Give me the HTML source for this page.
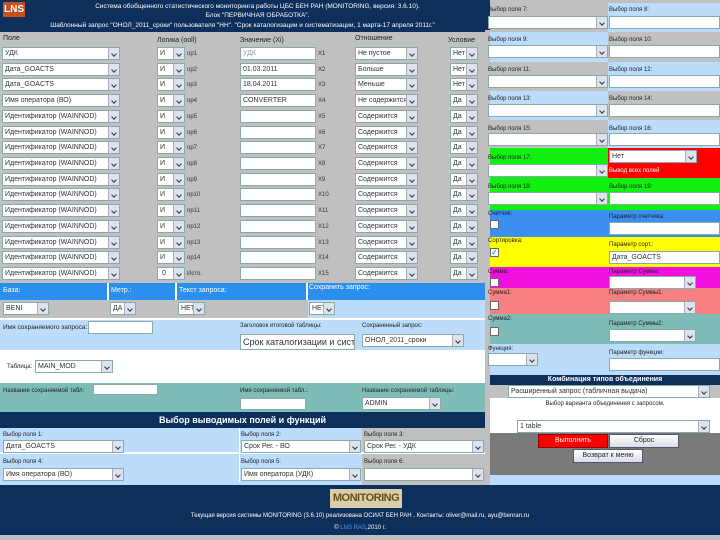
<!DOCTYPE html><html><head><meta charset="utf-8"><style>
*{margin:0;padding:0;box-sizing:border-box}
body{width:720px;height:540px;overflow:hidden;background:#c0c0c0;font-family:"Liberation Sans","DejaVu Sans",sans-serif;font-size:7px;color:#222;position:relative}
div,i,b,u,em{position:absolute;font-style:normal;font-weight:normal;text-decoration:none}
.r{left:0;width:485px;height:13px}
.s,.n{top:0;height:13px;background:#fff;border:1px solid #8aa;font-size:7px;line-height:11px;padding-left:2px;white-space:nowrap;overflow:hidden;color:#333}
.s::after{content:"";position:absolute;right:0;top:0;width:10px;height:11px;background:#dde3ee;border-left:1px solid #aab}
.s::before{content:"";position:absolute;right:3px;top:4px;width:3px;height:3px;border-right:1px solid #334;border-bottom:1px solid #334;transform:rotate(45deg);z-index:2}
b{font-size:6px;top:4px;color:#333}
.l{font-size:7px;white-space:nowrap;color:#222}
.lb{background:#bbdcfb}.gr{background:#c0c0c0}.nv{background:#0d2f5c}
.cb{width:9px;height:9px;background:#fff;border:1px solid #667}
</style></head><body>
<div class="nv" style="left:0;top:0;width:485px;height:32px"></div>
<div style="left:3px;top:2px;width:22px;height:15px;background:#c8501e;color:#fff;font-weight:bold;font-size:10px;line-height:15px;text-align:center">LNS</div>
<div class="l" style="left:30px;top:3px;width:455px;text-align:center;color:#fff;font-size:6.5px">Система обобщенного статистического мониторинга работы ЦБС БЕН РАН (MONITORING, версия: 3.6.10).</div>
<div class="l" style="left:30px;top:12px;width:455px;text-align:center;color:#fff;font-size:6.5px">Блок "ПЕРВИЧНАЯ ОБРАБОТКА".</div>
<div class="l" style="left:0;top:22px;width:485px;text-align:center;color:#fff;font-size:6.5px">Шаблонный запрос "ОНОЛ_2011_сроки" пользователя "НН". "Срок каталогизации и систематизации, 1 марта-17 апреля 2011г."</div>
<div class="l" style="left:3px;top:35px">Поле</div><div class="l" style="left:157px;top:37px">Логика (ooll)</div><div class="l" style="left:240px;top:37px">Значение (Xi)</div><div class="l" style="left:355px;top:35px">Отношение</div><div class="l" style="left:448px;top:37px">Условие</div>
<div class="r" style="top:47px"><i class="s" style="left:2px;width:118px">УДК</i><i class="s" style="left:157px;width:28px">И</i><b style="left:187px">op1</b><i class="n" style="left:240px;width:76px;color:#999">УДК</i><b style="left:318px">X1</b><i class="s" style="left:355px;width:63px">Не пустое</i><i class="s" style="left:450px;width:28px">Нет</i></div>
<div class="r" style="top:63px"><i class="s" style="left:2px;width:118px">Дата_GOACTS</i><i class="s" style="left:157px;width:28px">И</i><b style="left:187px">op2</b><i class="n" style="left:240px;width:76px">01.03.2011</i><b style="left:318px">X2</b><i class="s" style="left:355px;width:63px">Больше</i><i class="s" style="left:450px;width:28px">Нет</i></div>
<div class="r" style="top:78px"><i class="s" style="left:2px;width:118px">Дата_GOACTS</i><i class="s" style="left:157px;width:28px">И</i><b style="left:187px">op3</b><i class="n" style="left:240px;width:76px">18.04.2011</i><b style="left:318px">X3</b><i class="s" style="left:355px;width:63px">Меньше</i><i class="s" style="left:450px;width:28px">Нет</i></div>
<div class="r" style="top:94px"><i class="s" style="left:2px;width:118px">Имя оператора (ВО)</i><i class="s" style="left:157px;width:28px">И</i><b style="left:187px">op4</b><i class="n" style="left:240px;width:76px">CONVERTER</i><b style="left:318px">X4</b><i class="s" style="left:355px;width:63px">Не содержится</i><i class="s" style="left:450px;width:28px">Да</i></div>
<div class="r" style="top:110px"><i class="s" style="left:2px;width:118px">Идентификатор (WAINNOD)</i><i class="s" style="left:157px;width:28px">И</i><b style="left:187px">op5</b><i class="n" style="left:240px;width:76px"></i><b style="left:318px">X5</b><i class="s" style="left:355px;width:63px">Содержится</i><i class="s" style="left:450px;width:28px">Да</i></div>
<div class="r" style="top:126px"><i class="s" style="left:2px;width:118px">Идентификатор (WAINNOD)</i><i class="s" style="left:157px;width:28px">И</i><b style="left:187px">op6</b><i class="n" style="left:240px;width:76px"></i><b style="left:318px">X6</b><i class="s" style="left:355px;width:63px">Содержится</i><i class="s" style="left:450px;width:28px">Да</i></div>
<div class="r" style="top:141px"><i class="s" style="left:2px;width:118px">Идентификатор (WAINNOD)</i><i class="s" style="left:157px;width:28px">И</i><b style="left:187px">op7</b><i class="n" style="left:240px;width:76px"></i><b style="left:318px">X7</b><i class="s" style="left:355px;width:63px">Содержится</i><i class="s" style="left:450px;width:28px">Да</i></div>
<div class="r" style="top:157px"><i class="s" style="left:2px;width:118px">Идентификатор (WAINNOD)</i><i class="s" style="left:157px;width:28px">И</i><b style="left:187px">op8</b><i class="n" style="left:240px;width:76px"></i><b style="left:318px">X8</b><i class="s" style="left:355px;width:63px">Содержится</i><i class="s" style="left:450px;width:28px">Да</i></div>
<div class="r" style="top:173px"><i class="s" style="left:2px;width:118px">Идентификатор (WAINNOD)</i><i class="s" style="left:157px;width:28px">И</i><b style="left:187px">op9</b><i class="n" style="left:240px;width:76px"></i><b style="left:318px">X9</b><i class="s" style="left:355px;width:63px">Содержится</i><i class="s" style="left:450px;width:28px">Да</i></div>
<div class="r" style="top:188px"><i class="s" style="left:2px;width:118px">Идентификатор (WAINNOD)</i><i class="s" style="left:157px;width:28px">И</i><b style="left:187px">op10</b><i class="n" style="left:240px;width:76px"></i><b style="left:318px">X10</b><i class="s" style="left:355px;width:63px">Содержится</i><i class="s" style="left:450px;width:28px">Да</i></div>
<div class="r" style="top:204px"><i class="s" style="left:2px;width:118px">Идентификатор (WAINNOD)</i><i class="s" style="left:157px;width:28px">И</i><b style="left:187px">op11</b><i class="n" style="left:240px;width:76px"></i><b style="left:318px">X11</b><i class="s" style="left:355px;width:63px">Содержится</i><i class="s" style="left:450px;width:28px">Да</i></div>
<div class="r" style="top:220px"><i class="s" style="left:2px;width:118px">Идентификатор (WAINNOD)</i><i class="s" style="left:157px;width:28px">И</i><b style="left:187px">op12</b><i class="n" style="left:240px;width:76px"></i><b style="left:318px">X12</b><i class="s" style="left:355px;width:63px">Содержится</i><i class="s" style="left:450px;width:28px">Да</i></div>
<div class="r" style="top:236px"><i class="s" style="left:2px;width:118px">Идентификатор (WAINNOD)</i><i class="s" style="left:157px;width:28px">И</i><b style="left:187px">op13</b><i class="n" style="left:240px;width:76px"></i><b style="left:318px">X13</b><i class="s" style="left:355px;width:63px">Содержится</i><i class="s" style="left:450px;width:28px">Да</i></div>
<div class="r" style="top:251px"><i class="s" style="left:2px;width:118px">Идентификатор (WAINNOD)</i><i class="s" style="left:157px;width:28px">И</i><b style="left:187px">op14</b><i class="n" style="left:240px;width:76px"></i><b style="left:318px">X14</b><i class="s" style="left:355px;width:63px">Содержится</i><i class="s" style="left:450px;width:28px">Да</i></div>
<div class="r" style="top:267px"><i class="s" style="left:2px;width:118px">Идентификатор (WAINNOD)</i><i class="s" style="left:157px;width:28px">&nbsp;0</i><b style="left:187px">Исто.</b><i class="n" style="left:240px;width:76px"></i><b style="left:318px">X15</b><i class="s" style="left:355px;width:63px">Содержится</i><i class="s" style="left:450px;width:28px">Да</i></div>
<div style="left:0;top:283px;width:485px;height:17px;background:#2b8ff0"></div>
<div style="left:107px;top:283px;width:2px;height:17px;background:#fff"></div><div style="left:175px;top:283px;width:2px;height:17px;background:#fff"></div><div style="left:306px;top:283px;width:2px;height:17px;background:#fff"></div>
<div class="l" style="left:3px;top:287px;color:#fff">База:</div><div class="l" style="left:111px;top:287px;color:#fff">Метр.:</div><div class="l" style="left:179px;top:287px;color:#fff">Текст запроса:</div><div class="l" style="left:309px;top:284px;color:#fff">Сохранить запрос:</div>
<div style="left:308px;top:300px;width:177px;height:18px" class="lb"></div>
<div class="r" style="top:302px"><i class="s" style="left:3px;width:46px">BENI</i><i class="s" style="left:110px;width:26px">ДА</i><i class="s" style="left:178px;width:27px">НЕТ</i><i class="s" style="left:309px;width:26px">НЕТ</i></div>
<div class="lb" style="left:0;top:318px;width:485px;height:32px;border-top:2px solid #fff"></div>
<div class="l" style="left:3px;top:324px;font-size:6.5px">Имя сохраняемого запроса:</div><i class="n" style="left:88px;top:321px;width:65px"></i>
<div class="l" style="left:240px;top:323px;font-size:6px">Заголовок итоговой таблицы:</div>
<i class="n" style="left:240px;top:334px;width:115px;height:16px;font-size:9px;line-height:14px">Срок каталогизации и систем</i>
<div class="l" style="left:362px;top:323px;font-size:6px">Сохраненный запрос:</div>
<i class="s" style="left:362px;top:334px;width:102px">ОНОЛ_2011_сроки</i>
<div style="left:0;top:350px;width:485px;height:33px;background:#fff"></div>
<div class="l" style="left:7px;top:364px;font-size:6px">Таблица:</div><i class="s" style="left:35px;top:360px;width:78px">MAIN_MOD</i>
<div style="left:0;top:383px;width:485px;height:29px;background:#7ebcb8"></div>
<div class="l" style="left:3px;top:388px;font-size:6px">Название сохраняемой табл:</div><i class="n" style="left:93px;top:384px;width:65px;height:11px"></i>
<div class="l" style="left:240px;top:388px;font-size:6px">Имя сохраняемой табл.:</div><i class="n" style="left:240px;top:398px;width:66px;height:12px"></i>
<div class="l" style="left:362px;top:388px;font-size:6px">Название сохраняемой таблицы:</div><i class="s" style="left:362px;top:397px;width:79px">ADMIN</i>
<div class="nv" style="left:0;top:412px;width:485px;height:16px;color:#fff;font-size:9px;font-weight:bold;text-align:center;line-height:16px">Выбор выводимых полей и функций</div>
<div class="lb" style="left:0;top:428px;width:362px;height:57px"></div>
<div style="left:0;top:452px;width:485px;height:2px;background:#fff"></div>
<div style="left:239px;top:428px;width:1px;height:54px;background:#fff"></div>
<div class="l" style="left:3px;top:432px;font-size:6px">Выбор поля 1:</div><div class="l" style="left:241px;top:432px;font-size:6px">Выбор поля 2:</div><div class="l" style="left:364px;top:432px;font-size:6px">Выбор поля 3:</div>
<i class="s" style="left:3px;top:440px;width:121px">Дата_GOACTS</i><i class="s" style="left:241px;top:440px;width:120px">Срок Рег. - ВО</i><i class="s" style="left:364px;top:440px;width:120px">Срок Рег. - УДК</i>
<div class="l" style="left:3px;top:459px;font-size:6px">Выбор поля 4:</div><div class="l" style="left:241px;top:459px;font-size:6px">Выбор поля 5:</div><div class="l" style="left:364px;top:459px;font-size:6px">Выбор поля 6:</div>
<i class="s" style="left:3px;top:468px;width:121px">Имя оператора (ВО)</i><i class="s" style="left:241px;top:468px;width:120px">Имя оператора (УДК)</i><i class="s" style="left:364px;top:468px;width:120px"></i>
<div class="nv" style="left:485px;top:0;width:5px;height:30px"></div>
<div class="gr" style="left:490px;top:3px;width:118px;height:29px"></div><div class="lb" style="left:608px;top:3px;width:112px;height:29px"></div>
<div class="lb" style="left:490px;top:32px;width:118px;height:30px"></div><div class="gr" style="left:608px;top:32px;width:112px;height:30px"></div>
<div class="gr" style="left:490px;top:62px;width:118px;height:29px"></div><div class="lb" style="left:608px;top:62px;width:112px;height:29px"></div>
<div class="lb" style="left:490px;top:91px;width:118px;height:29px"></div><div class="gr" style="left:608px;top:91px;width:112px;height:29px"></div>
<div class="gr" style="left:490px;top:120px;width:118px;height:28px"></div><div class="lb" style="left:608px;top:120px;width:112px;height:28px"></div>
<div style="left:490px;top:148px;width:230px;height:62px;background:#11f011"></div>
<div style="left:608px;top:148px;width:112px;height:30px;background:#f00"></div>
<div style="left:490px;top:210px;width:230px;height:27px;background:#3a8ff0"></div>
<div style="left:490px;top:237px;width:230px;height:30px;background:#ffff00"></div>
<div style="left:490px;top:267px;width:230px;height:21px;background:#f010e0"></div>
<div style="left:490px;top:288px;width:230px;height:26px;background:#f88080"></div>
<div style="left:490px;top:314px;width:230px;height:30px;background:#7ebcb8"></div>
<div class="lb" style="left:490px;top:344px;width:230px;height:31px"></div>
<div class="l" style="left:488px;top:7px;font-size:6px">Выбор поля 7:</div><div class="l" style="left:609px;top:7px;font-size:6px">Выбор поля 8:</div>
<i class="s" style="left:488px;top:16px;width:120px"></i><i class="n" style="left:609px;top:16px;width:111px"></i>
<div class="l" style="left:488px;top:37px;font-size:6px">Выбор поля 9:</div><div class="l" style="left:609px;top:37px;font-size:6px">Выбор поля 10:</div>
<i class="s" style="left:488px;top:45px;width:120px"></i><i class="n" style="left:609px;top:45px;width:111px"></i>
<div class="l" style="left:488px;top:67px;font-size:6px">Выбор поля 11:</div><div class="l" style="left:609px;top:67px;font-size:6px">Выбор поля 12:</div>
<i class="s" style="left:488px;top:75px;width:120px"></i><i class="n" style="left:609px;top:75px;width:111px"></i>
<div class="l" style="left:488px;top:96px;font-size:6px">Выбор поля 13:</div><div class="l" style="left:609px;top:96px;font-size:6px">Выбор поля 14:</div>
<i class="s" style="left:488px;top:104px;width:120px"></i><i class="n" style="left:609px;top:104px;width:111px"></i>
<div class="l" style="left:488px;top:126px;font-size:6px">Выбор поля 15:</div><div class="l" style="left:609px;top:126px;font-size:6px">Выбор поля 16:</div>
<i class="s" style="left:488px;top:133px;width:120px"></i><i class="n" style="left:609px;top:133px;width:111px"></i>
<div class="l" style="left:488px;top:155px;font-size:6px">Выбор поля 17:</div><i class="s" style="left:609px;top:150px;width:88px">Нет</i>
<div class="l" style="left:609px;top:168px;font-size:6px;color:#fff">Вывод всех полей</div>
<i class="s" style="left:488px;top:164px;width:120px"></i>
<div class="l" style="left:488px;top:184px;font-size:6px">Выбор поля 18:</div><div class="l" style="left:609px;top:184px;font-size:6px">Выбор поля 19:</div>
<i class="s" style="left:488px;top:192px;width:120px"></i><i class="n" style="left:609px;top:192px;width:111px"></i>
<div class="l" style="left:488px;top:211px;font-size:6px">Счетчик:</div><i class="cb" style="left:490px;top:220px"></i>
<div class="l" style="left:609px;top:214px;font-size:6px">Параметр счетчика:</div><i class="n" style="left:609px;top:222px;width:111px"></i>
<div class="l" style="left:488px;top:238px;font-size:6px">Сортировка:</div><i class="cb" style="left:490px;top:248px;font-size:8px;line-height:7px;color:#080">✓</i>
<div class="l" style="left:609px;top:242px;font-size:6px">Параметр сорт.:</div><i class="n" style="left:609px;top:251px;width:111px">Дата_GOACTS</i>
<div class="l" style="left:488px;top:269px;font-size:6px">Сумма:</div><i class="cb" style="left:490px;top:278px"></i>
<div class="l" style="left:609px;top:269px;font-size:6px">Параметр Суммы:</div><i class="s" style="left:609px;top:276px;width:87px"></i>
<div class="l" style="left:488px;top:290px;font-size:6px">Сумма1:</div><i class="cb" style="left:490px;top:301px"></i>
<div class="l" style="left:609px;top:290px;font-size:6px">Параметр Суммы1:</div><i class="s" style="left:609px;top:301px;width:87px"></i>
<div class="l" style="left:488px;top:316px;font-size:6px">Сумма2:</div><i class="cb" style="left:490px;top:327px"></i>
<div class="l" style="left:609px;top:321px;font-size:6px">Параметр Суммы2:</div><i class="s" style="left:609px;top:329px;width:87px"></i>
<div class="l" style="left:488px;top:346px;font-size:6px">Функция:</div><i class="s" style="left:488px;top:353px;width:50px"></i>
<div class="l" style="left:609px;top:350px;font-size:6px">Параметр функции:</div><i class="n" style="left:609px;top:358px;width:111px"></i>
<div class="nv" style="left:490px;top:375px;width:230px;height:10px;color:#fff;font-size:7px;font-weight:bold;text-align:center;line-height:10px">Комбинация типов объединения</div>
<i class="s" style="left:508px;top:385px;width:202px">Расширенный запрос (табличная выдача)</i>
<div style="left:490px;top:398px;width:230px;height:35px;background:#fff"></div>
<div class="l" style="left:490px;top:401px;width:230px;text-align:center;font-size:6px">Выбор варианта объединения с запросом.</div>
<i class="s" style="left:517px;top:420px;width:193px">1 table</i>
<div style="left:490px;top:433px;width:230px;height:42px;background:#7a7a7a"></div>
<div style="left:538px;top:434px;width:70px;height:14px;background:#f00;border:1px solid #900;color:#fff;font-size:7px;text-align:center;line-height:12px">Выполнить</div>
<div style="left:609px;top:434px;width:70px;height:14px;background:linear-gradient(#fff,#d8dce4);border:1px solid #556;font-size:7px;text-align:center;line-height:12px">Сброс</div>
<div style="left:573px;top:449px;width:70px;height:14px;background:linear-gradient(#fff,#d8dce4);border:1px solid #556;font-size:7px;text-align:center;line-height:12px">Возврат к меню</div>
<div class="lb" style="left:490px;top:475px;width:230px;height:10px"></div>
<div class="nv" style="left:0;top:485px;width:720px;height:50px"></div>
<div style="left:330px;top:489px;width:72px;height:19px;background:#d8cfa8;color:#6b4d1a;font-weight:bold;font-size:11px;text-align:center;line-height:19px;letter-spacing:-0.5px">MONITORING</div>
<div class="l" style="left:0;top:513px;width:720px;text-align:center;color:#fff;font-size:6px">Текущая версия системы MONITORING (3.6.10) реализована  ОСИАТ БЕН РАН . Контакты: oliver@mail.ru, ayu@benran.ru</div>
<div class="l" style="left:0;top:525px;width:720px;text-align:center;color:#fff;font-size:6px">© <span style="color:#4a9cf0">LNS RAS</span>,2010 г.</div>
</body></html>
